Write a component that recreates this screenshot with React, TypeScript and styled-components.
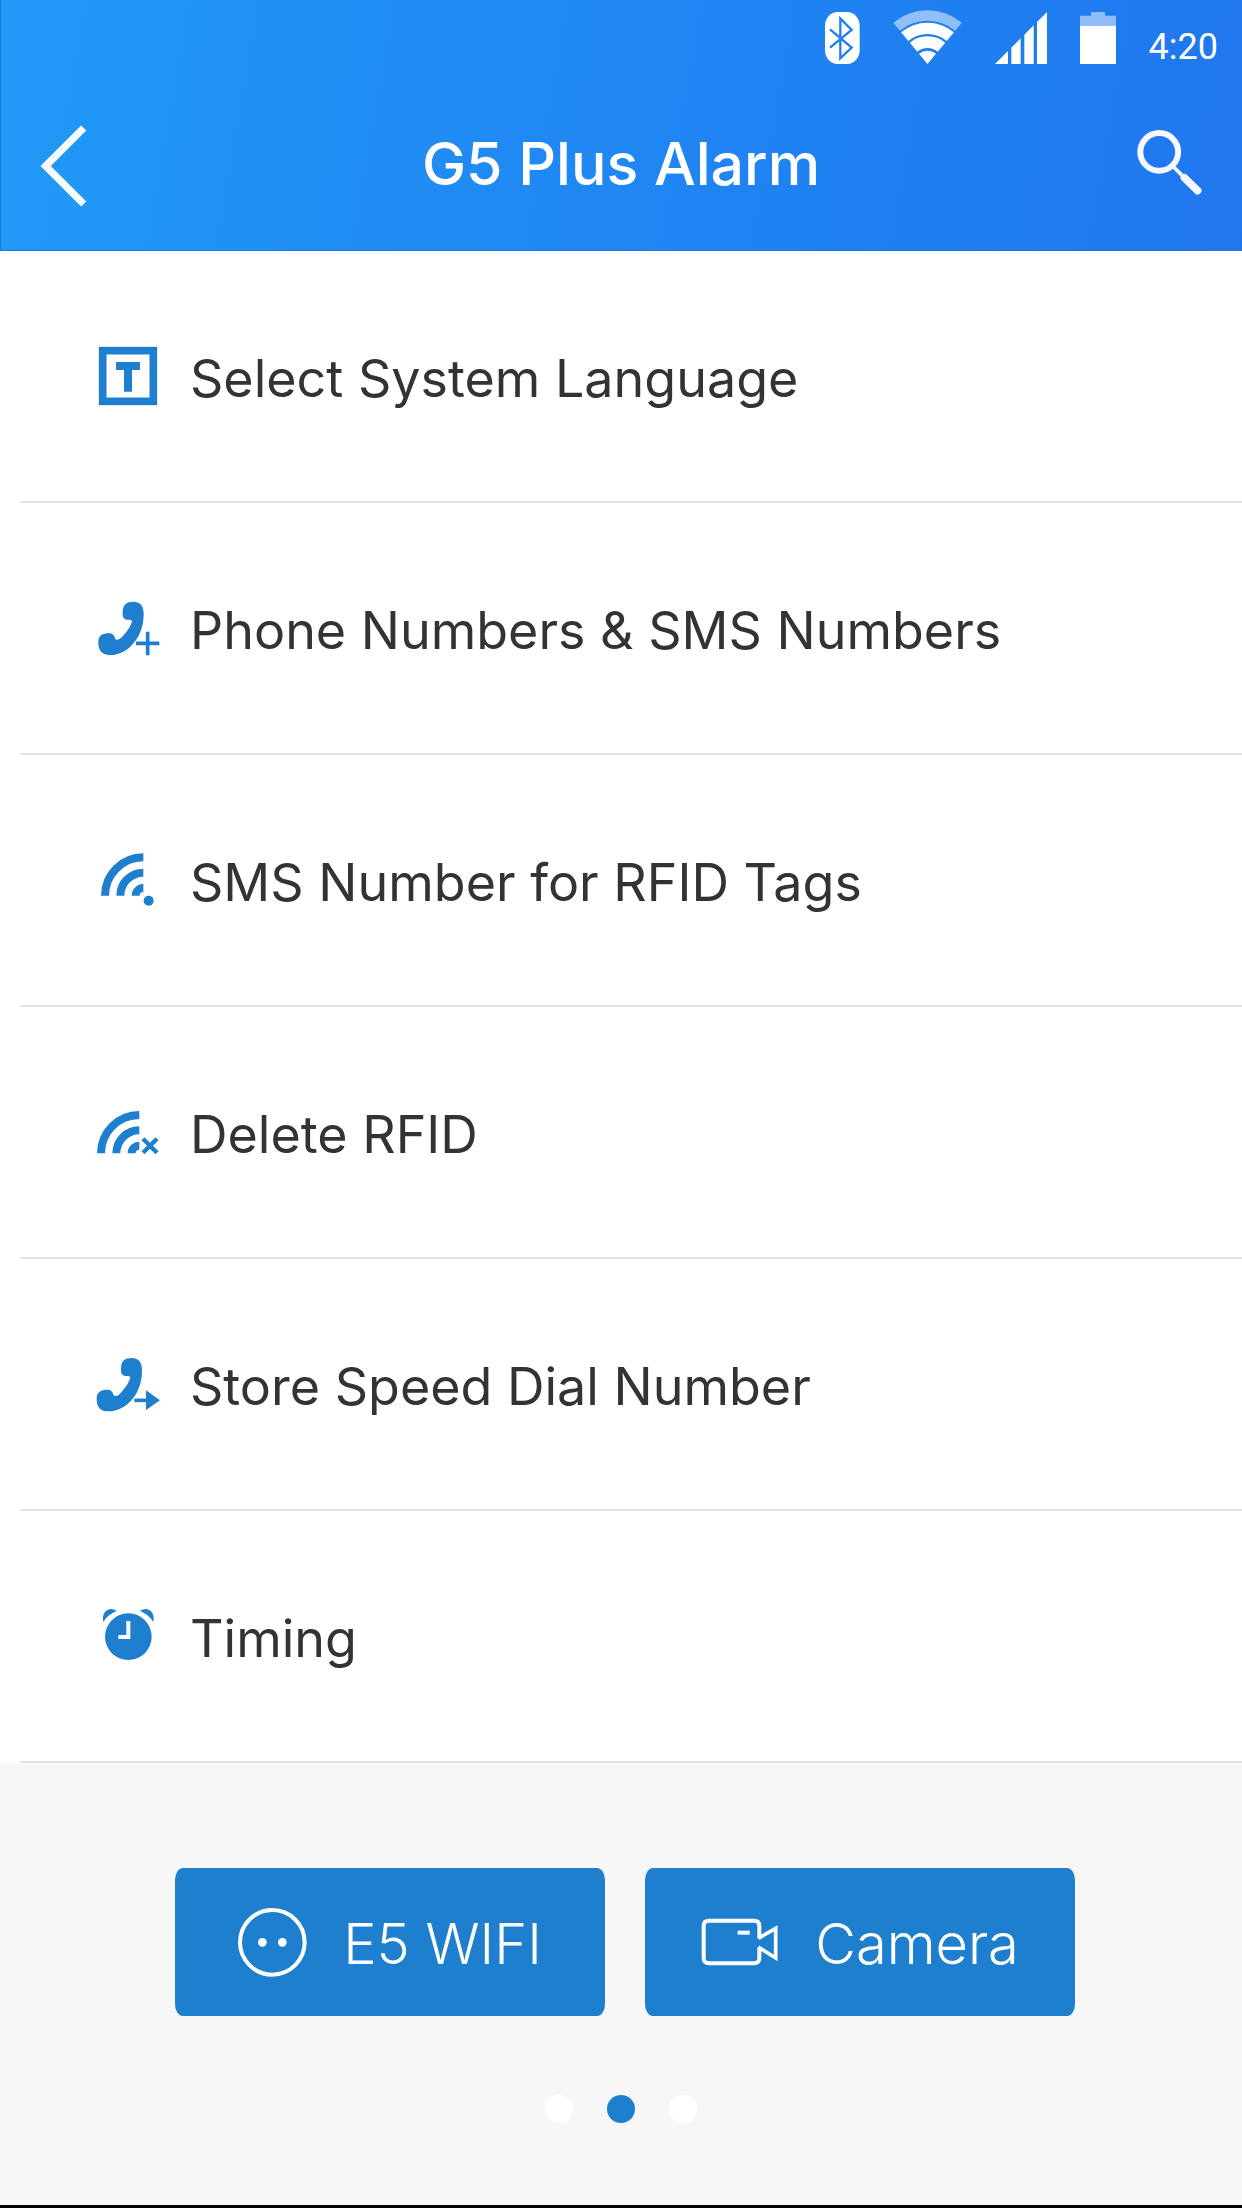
import React from "react";
import styled, { createGlobalStyle } from "styled-components";

const BLUE = "#1e7fcf";

const GlobalStyle = createGlobalStyle`
  *, *::before, *::after { box-sizing: border-box; }
  body { margin: 0; background: #f7f7f7; }
  button { border: 0; padding: 0; background: none; color: inherit; font: inherit; cursor: pointer; }
  svg { display: block; flex: none; }
`;

const Screen = styled.div`
  display: flex;
  flex-direction: column;
  min-height: 100vh;
  border-bottom: 3px solid #000;
  background: #f7f7f7;
  color: #333;
  font-family: Inter, "Noto Sans", sans-serif;
`;

const Header = styled.header`
  color: #fff;
  background: linear-gradient(100deg, #209af6 0%, #2088f3 45%, #1f7ff0 75%, #2176ee 100%);
  box-shadow: inset 1px -1px 0 #1c79d8;
`;

const StatusBar = styled.div`
  display: flex;
  align-items: flex-end;
  justify-content: flex-end;
  gap: 33px;
  height: 80px;
  padding: 0 24px 16px;
`;

const Clock = styled.time`
  font: 400 36px/34px Roboto, sans-serif;
`;

const NavBar = styled.div`
  display: grid;
  grid-template-columns: 65px 1fr 65px;
  align-items: center;
  height: 171px;
  padding: 0 40px;
`;

const NavButton = styled.button`
  display: flex;
  align-items: center;
  height: 82px;
`;

const SearchButton = styled(NavButton)`
  padding-bottom: 6px;
`;

const Title = styled.h1`
  margin: 0;
  padding-bottom: 4px;
  font-size: 59px;
  font-weight: 500;
  line-height: 72px;
  text-align: center;
`;

const Menu = styled.ul`
  margin: 0;
  padding: 0;
  list-style: none;
  background: #fff;
`;

const MenuItem = styled.li`
  margin-left: 20px;
  box-shadow: inset 0 -2px 0 #e4e4e4;
`;

const MenuButton = styled.button`
  display: flex;
  align-items: center;
  gap: 30px;
  width: 100%;
  height: 252px;
  padding: 0 76px 2px;
  text-align: left;
`;

const MenuLabel = styled.span`
  padding-top: 6px;
  font-size: 52px;
  font-weight: 400;
  line-height: 64px;
`;

const Footer = styled.footer`
  display: flex;
  flex-direction: column;
  align-items: center;
  gap: 79px;
  padding: 105px 24px 80px;
`;

const Actions = styled.div`
  display: flex;
  justify-content: center;
  gap: 40px;
  width: 100%;
  padding-left: 8px;
`;

const ActionButton = styled.button`
  display: flex;
  flex: 0 1 430px;
  align-items: center;
  justify-content: center;
  gap: 36px;
  height: 148px;
  border-radius: 8px / 12px;
  background: ${BLUE};
  color: #fff;
`;

const ActionLabel = styled.span`
  padding-top: 4px;
  font-size: 56px;
  font-weight: 300;
  line-height: 64px;
`;

const Dots = styled.nav`
  display: flex;
  gap: 34px;
`;

const Dot = styled.button<{ $active?: boolean }>`
  width: 28px;
  height: 28px;
  border-radius: 50%;
  background: ${(p) => (p.$active ? BLUE : "#fff")};
`;

const wedge = (outer: number, inner: number) => {
  const p = (r: number, side: number) => `${103 + side * 0.639 * r} ${162 - 0.769 * r}`;
  return `M${p(outer, -1)}A${outer} ${outer} 0 0 1 ${p(outer, 1)}L${p(inner, 1)}A${inner} ${inner} 0 0 0 ${p(inner, -1)}Z`;
};

const BluetoothIcon = () => (
  <svg width="35" height="52" viewBox="0 0 105 156" fill="none">
    <rect width="104" height="156" rx="38" ry="42" fill="#fff" />
    <path d="M15 52L80 107L46 139V20L80 54L15 107" stroke="#2080f0" strokeWidth="7" />
  </svg>
);

const WifiIcon = () => (
  <svg width="69" height="54" viewBox="0 0 206 162" fill="#fff">
    <path d={wedge(161, 130)} opacity="0.5" />
    <path d={wedge(124, 90)} />
    <path d={wedge(83, 48)} />
    <path d={wedge(40, 0.1)} />
  </svg>
);

const SignalIcon = () => (
  <svg width="52" height="52" viewBox="0 0 156 156" fill="#fff">
    {[[0, 39], [49, 77], [88, 116], [126, 156]].map(([a, b]) => (
      <polygon key={a} points={`${a},156 ${a},${156 - a} ${b},${156 - b} ${b},156`} />
    ))}
  </svg>
);

const BatteryIcon = () => (
  <svg width="36" height="52" viewBox="0 0 106 156" preserveAspectRatio="none" fill="#fff">
    <path d="M32 0H74V11H106V41H0V11H32Z" opacity="0.5" />
    <path d="M0 41H106V156H0Z" />
  </svg>
);

const BackIcon = () => (
  <svg width="47" height="82" viewBox="0 0 141 246" fill="none" stroke="#fafafa" strokeWidth="22">
    <path d="M131 9L17 123L131 237" />
  </svg>
);

const SearchIcon = () => (
  <svg width="65" height="65" viewBox="0 0 196 196" fill="none" stroke="#f5f8ff">
    <circle cx="67" cy="66" r="57" strokeWidth="18" />
    <path d="M107 108L141 142" strokeWidth="11" />
    <path d="M143 144L183 183" strokeWidth="23" strokeLinecap="round" />
  </svg>
);

const RowIcon = ({ children }: { children: React.ReactNode }) => (
  <svg width="64" height="64" viewBox="0 0 192 192" fill="none" stroke={BLUE} aria-hidden="true">
    {children}
  </svg>
);

const Handset = ({ x = 0, y = 0 }: { x?: number; y?: number }) => (
  <path
    transform={`translate(${x} ${y})`}
    fill={BLUE}
    stroke="none"
    d="M80 48C80 26 92 17 112 17C135 17 143 32 143 55C143 95 128 130 100 155C80 171 60 178 38 177C15 176 6 160 7 136C8 119 20 112 38 112C50 112 55 118 58 129C62 134 71 130 77 124C91 110 104 92 108 75C106 70 98 72 92 71C82 69 79 62 80 48Z"
  />
);

const Waves = ({ x, y }: { x: number; y: number }) => (
  <path
    strokeWidth="24"
    d={[115, 69, 23].map((r) => `M${x - r} ${y}A${r} ${r} 0 0 1 ${x} ${y - r}`).join("")}
  />
);

const items: { label: string; icon: React.ReactNode }[] = [
  {
    label: "Select System Language",
    icon: (
      <>
        <rect x="20" y="20" width="152" height="152" strokeWidth="23" />
        <path d="M60 66H132M96 66V143" strokeWidth="24" />
      </>
    ),
  },
  {
    label: "Phone Numbers & SMS Numbers",
    icon: (
      <>
        <Handset />
        <path d="M120 142H190M155 107V178" strokeWidth="11" />
      </>
    ),
  },
  {
    label: "SMS Number for RFID Tags",
    icon: (
      <>
        <Waves x={142} y={143} />
        <circle cx="158" cy="158" r="15" fill={BLUE} stroke="none" />
      </>
    ),
  },
  {
    label: "Delete RFID",
    icon: (
      <>
        <Waves x={130} y={160} />
        <path d="M141 116L183 158M183 116L141 158" strokeWidth="13" />
      </>
    ),
  },
  {
    label: "Store Speed Dial Number",
    icon: (
      <>
        <Handset x={-5} y={1} />
        <path d="M115 145H155" strokeWidth="11" />
        <path d="M150 115L192 145L150 174Z" fill={BLUE} stroke="none" />
      </>
    ),
  },
  {
    label: "Timing",
    icon: (
      <>
        <g fill={BLUE} stroke="none">
          <circle cx="97" cy="98" r="70" />
          <path d="M22 54C17 30 30 15 45 15C52 15 58 18 62 21C45 28 32 38 22 54Z" />
          <path d="M172 54C177 30 164 15 149 15C142 15 136 18 132 21C149 28 162 38 172 54Z" />
        </g>
        <path d="M97 51V99H67" stroke="#fff" strokeWidth="12" />
      </>
    ),
  },
];

const SocketIcon = () => (
  <svg width="69" height="69" viewBox="0 0 207 207" fill="none" aria-hidden="true">
    <circle cx="103" cy="103" r="97" stroke="#fff" strokeWidth="12" />
    <circle cx="73" cy="103" r="13" fill="#fff" />
    <circle cx="133" cy="103" r="13" fill="#fff" />
  </svg>
);

const CameraIcon = () => (
  <svg width="78" height="48" viewBox="0 0 234 144" fill="none" stroke="#fff" strokeWidth="12" aria-hidden="true">
    <path d="M175 61V24Q175 8 159 8H24Q8 8 8 24V120Q8 136 24 136H159Q175 136 175 120V89" />
    <path d="M172 61L224 31V120L172 87" strokeWidth="11" />
    <path d="M110 44H146" />
  </svg>
);

export default function App() {
  return (
    <>
      <GlobalStyle />
      <Screen>
        <Header>
          <StatusBar>
            <BluetoothIcon />
            <WifiIcon />
            <SignalIcon />
            <BatteryIcon />
            <Clock>4:20</Clock>
          </StatusBar>
          <NavBar>
            <NavButton type="button" aria-label="Back"><BackIcon /></NavButton>
            <Title>G5 Plus Alarm</Title>
            <SearchButton type="button" aria-label="Search"><SearchIcon /></SearchButton>
          </NavBar>
        </Header>
        <main>
          <Menu>
            {items.map((item) => (
              <MenuItem key={item.label}>
                <MenuButton type="button">
                  <RowIcon>{item.icon}</RowIcon>
                  <MenuLabel>{item.label}</MenuLabel>
                </MenuButton>
              </MenuItem>
            ))}
          </Menu>
        </main>
        <Footer>
          <Actions>
            <ActionButton type="button">
              <SocketIcon />
              <ActionLabel>E5 WIFI</ActionLabel>
            </ActionButton>
            <ActionButton type="button">
              <CameraIcon />
              <ActionLabel>Camera</ActionLabel>
            </ActionButton>
          </Actions>
          <Dots aria-label="Pages">
            <Dot type="button" aria-label="Page 1" />
            <Dot type="button" aria-label="Page 2" aria-current="page" $active />
            <Dot type="button" aria-label="Page 3" />
          </Dots>
        </Footer>
      </Screen>
    </>
  );
}
